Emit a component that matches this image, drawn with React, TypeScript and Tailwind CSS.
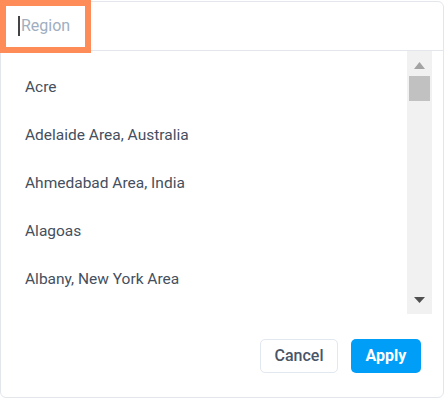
import React from "react";

const regions = [
  "Acre",
  "Adelaide Area, Australia",
  "Ahmedabad Area, India",
  "Alagoas",
  "Albany, New York Area",
];

function Scrollbar() {
  return (
    <div className="w-[25px] h-full bg-[#f1f1f1] flex flex-col items-center shrink-0">
      <div className="h-[25px] flex items-center justify-center pt-[3px]">
        <svg width="11" height="7" viewBox="0 0 11 7">
          <path d="M5.5 0 L11 7 L0 7 Z" fill="#a3a3a3" />
        </svg>
      </div>
      <div className="w-[21px] h-[25px] bg-[#c1c1c1]" />
      <div className="flex-1" />
      <div className="h-[25px] flex items-center justify-center pb-[3px]">
        <svg width="11" height="6" viewBox="0 0 11 6">
          <path d="M0 0 L11 0 L5.5 6 Z" fill="#505050" />
        </svg>
      </div>
    </div>
  );
}

export default function App() {
  return (
    <div
      className="relative w-[444px] h-[401px] bg-white pt-px"
      style={{ fontFamily: "Roboto, 'Liberation Sans', sans-serif" }}
    >
      <div className="w-[444px] h-[397px] border border-[#e3e6eb] rounded-md bg-white flex flex-col">
        {/* Search header */}
        <div className="h-[49px] border-b border-[#e3e6eb] flex items-center pl-[17px] shrink-0">
          <span className="w-[2px] h-[20px] bg-[#444] mr-[1px]" />
          <span className="text-[16px] text-[#a0aec0]">Region</span>
        </div>

        {/* Options list */}
        <div className="h-[263px] flex pr-[11px] shrink-0">
          <div className="flex-1 overflow-hidden pt-[13px]">
            {regions.map((r) => (
              <div
                key={r}
                className="h-12 flex items-center pl-6 text-[15.5px] text-[#454f5e]"
              >
                {r}
              </div>
            ))}
          </div>
          <Scrollbar />
        </div>

        {/* Footer actions */}
        <div className="flex-1 flex items-start justify-end gap-[13px] pt-[25px] pr-[22px]">
          <button className="w-[78px] h-[34px] rounded-[5px] border border-[#e2e8f0] bg-white text-[16px] font-medium text-[#4a5568]">
            Cancel
          </button>
          <button className="w-[70px] h-[34px] rounded-[5px] bg-[#009ef7] text-[16px] font-bold text-white">
            Apply
          </button>
        </div>
      </div>

      {/* focus highlight */}
      <div className="absolute left-0 top-0 w-[91px] h-[53px] border-[6px] border-[#fd8c58]" />
    </div>
  );
}
